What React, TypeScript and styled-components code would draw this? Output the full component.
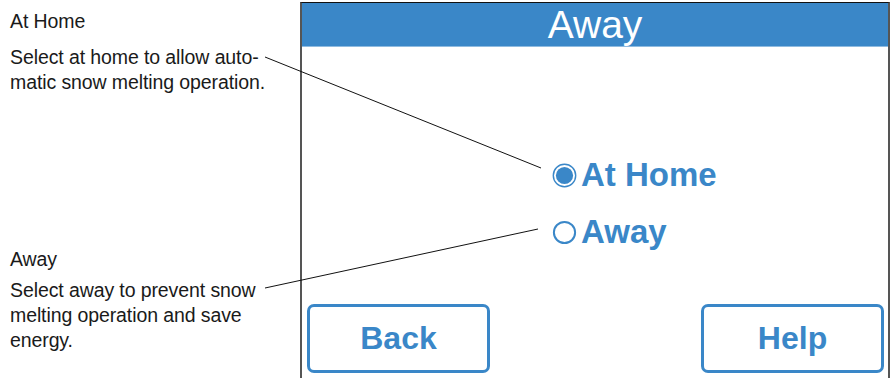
import styled, { createGlobalStyle } from "styled-components";

const GlobalStyle = createGlobalStyle`
  html, body {
    margin: 0;
    padding: 0;
    background: #ffffff;
  }
`;

const BLUE = "#3a87c8";

const Page = styled.div`
  position: relative;
  width: 891px;
  height: 378px;
  overflow: hidden;
  display: flex;
  background: #fff;
`;

const Notes = styled.div`
  width: 300px;
  padding: 9px 0 0 10px;
  box-sizing: border-box;
  font-family: "Liberation Sans", Arial, sans-serif;
  font-size: 19.5px;
  line-height: 25px;
  letter-spacing: -0.1px;
  color: #1a1a1a;
`;

const Note = styled.div<{ gap?: number }>`
  margin-top: ${({ gap }) => gap ?? 0}px;
`;

const NoteTitle = styled.div<{ space: number }>`
  margin-bottom: ${({ space }) => space}px;
`;

const NoteText = styled.p`
  margin: 0;
`;

const Screen = styled.div`
  margin-top: 2px;
  width: 590px;
  height: 376px;
  box-sizing: border-box;
  border-top: 1px solid #111;
  border-left: 2px solid #555;
  border-right: 2px solid #555;
  display: flex;
  flex-direction: column;
`;

const Header = styled.div`
  height: 43px;
  background: ${BLUE};
  border-bottom: 1px solid #8fbbe0;
  display: flex;
  align-items: center;
  justify-content: center;
  color: #fff;
  font-family: "Liberation Sans", Arial, sans-serif;
  font-size: 39px;
  line-height: 1;
`;

const Body = styled.div`
  flex: 1;
  padding: 108px 0 0 250px;
  display: flex;
  flex-direction: column;
  gap: 17px;
`;

const Option = styled.div`
  display: flex;
  align-items: center;
  gap: 4px;
  height: 40px;
  color: ${BLUE};
  font-family: "Liberation Sans", Arial, sans-serif;
  font-weight: bold;
  font-size: 33px;
`;

const Footer = styled.div`
  display: flex;
  justify-content: space-between;
  padding: 0 4px 5px 5px;
`;

const Button = styled.div`
  width: 183px;
  height: 69px;
  box-sizing: border-box;
  border: 3px solid ${BLUE};
  border-radius: 7px;
  display: flex;
  align-items: center;
  justify-content: center;
  color: ${BLUE};
  font-family: "Liberation Sans", Arial, sans-serif;
  font-weight: bold;
  font-size: 32px;
`;

const Leaders = styled.svg`
  position: absolute;
  left: 0;
  top: 0;
  pointer-events: none;
`;

const Radio = ({ checked }: { checked: boolean }) => (
  <svg width="25" height="25" viewBox="0 0 25 25">
    {checked ? (
      <>
        <circle cx="12.5" cy="12.5" r="11.2" fill="none" stroke={BLUE} strokeWidth="1.4" />
        <circle cx="12.5" cy="12.5" r="8.6" fill={BLUE} />
      </>
    ) : (
      <circle cx="12.5" cy="12.5" r="10.6" fill="none" stroke={BLUE} strokeWidth="2" />
    )}
  </svg>
);

export default function App() {
  return (
    <Page>
      <GlobalStyle />
      <Notes>
        <Note>
          <NoteTitle space={11}>At Home</NoteTitle>
          <NoteText>
            Select at home to allow auto-
            <br />
            matic snow melting operation.
          </NoteText>
        </Note>
        <Note gap={152}>
          <NoteTitle space={6}>Away</NoteTitle>
          <NoteText>
            Select away to prevent snow
            <br />
            melting operation and save
            <br />
            energy.
          </NoteText>
        </Note>
      </Notes>
      <Screen>
        <Header>Away</Header>
        <Body>
          <Option>
            <Radio checked />
            At Home
          </Option>
          <Option>
            <Radio checked={false} />
            Away
          </Option>
        </Body>
        <Footer>
          <Button>Back</Button>
          <Button>Help</Button>
        </Footer>
      </Screen>
      <Leaders width="891" height="378">
        <line x1="265" y1="57" x2="541" y2="168" stroke="#111" strokeWidth="1" />
        <line x1="265" y1="288" x2="538" y2="229" stroke="#111" strokeWidth="1" />
      </Leaders>
    </Page>
  );
}
